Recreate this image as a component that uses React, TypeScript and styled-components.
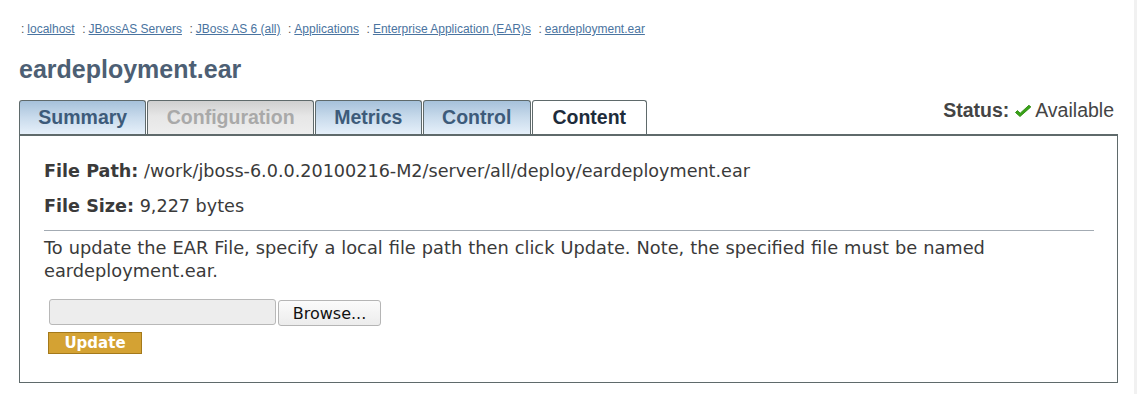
import React from "react";
import styled, { createGlobalStyle } from "styled-components";

const Global = createGlobalStyle`
  html, body { margin: 0; padding: 0; background: #fff; }
  body { font-family: "Liberation Sans", Arial, sans-serif; }
`;

const Page = styled.div`
  width: 1137px;
  min-height: 394px;
  box-sizing: border-box;
  border-right: 3px solid #f1f1f1;
  padding: 20px 16px 0 19px;
`;

const Crumbs = styled.nav`
  display: flex;
  gap: 7.5px;
  padding-left: 2px;
  font-size: 12px;
  line-height: 18px;
  color: #555;
`;

const Crumb = styled.span`
  display: inline-flex;
  gap: 3px;
`;

const CrumbLink = styled.a`
  color: #4a74a0;
  text-decoration: underline;
  cursor: pointer;
`;

const Title = styled.h1`
  margin: 16px 0 0;
  font-size: 25px;
  line-height: 30px;
  font-weight: bold;
  color: #4d5f74;
`;

const TabRow = styled.div`
  display: flex;
  align-items: flex-end;
  justify-content: space-between;
  margin-top: 15px;
`;

const Tabs = styled.div`
  display: flex;
  gap: 1px;
`;

const Tab = styled.div<{ $kind: "normal" | "disabled" | "active" }>`
  height: 34px;
  box-sizing: border-box;
  padding: 0 ${(p) => (p.$kind === "active" ? "19.8px" : "18.3px")};
  display: flex;
  align-items: center;
  font-size: 19.5px;
  font-weight: bold;
  border: 1px solid #5f6a6b;
  border-bottom: none;
  border-radius: 3px 3px 0 0;
  color: ${(p) =>
    p.$kind === "disabled" ? "#a9a9a9" : p.$kind === "active" ? "#1e2c3b" : "#3d5b7a"};
  background: ${(p) =>
    p.$kind === "disabled"
      ? "linear-gradient(#cfcfcf, #e6e6e6 45%, #eeeeee)"
      : p.$kind === "active"
      ? "#ffffff"
      : "linear-gradient(#a6c1da, #c9dbec 50%, #e6f0fa)"};
`;

const Status = styled.div`
  display: flex;
  align-items: center;
  gap: 3px;
  font-size: 19.5px;
  color: #444;
  padding-right: 4px;
  margin-bottom: 12px;
`;

const StatusLabel = styled.b`
  margin-right: 2px;
`;

const Panel = styled.section`
  border: 1px solid #5f6a6b;
  border-top-width: 2px;
  padding: 25px 23px 28px 24px;
  font-family: "DejaVu Sans", sans-serif;
  font-size: 17.6px;
  color: #3a3a3a;
`;

const Field = styled.p`
  margin: 0 0 14px;
  line-height: 21px;
`;

const Rule = styled.hr`
  border: none;
  border-top: 1px solid #a3abb3;
  margin: -1px 0 5px;
`;

const Note = styled.p`
  margin: 0;
  line-height: 23px;
  font-size: 17.8px;
  word-spacing: 0.35px;
`;

const UploadRow = styled.div`
  display: flex;
  align-items: center;
  gap: 2px;
  margin: 16px 0 0 5px;
`;

const FileBox = styled.div`
  width: 227px;
  height: 26px;
  box-sizing: border-box;
  border: 1px solid #b8b8b8;
  border-radius: 3px;
  background: #ededed;
`;

const Browse = styled.button`
  width: 103px;
  height: 26px;
  margin-top: 2px;
  border: 1px solid #b5b5b5;
  border-radius: 3px;
  background: linear-gradient(#fbfbfb, #ececec);
  font-family: "DejaVu Sans", sans-serif;
  font-size: 16px;
  color: #111;
  padding: 0;
`;

const UpdateButton = styled.button`
  display: block;
  margin: 6px 0 0 4px;
  width: 94px;
  height: 22px;
  border: 1px solid #a4791a;
  background: #d4a233;
  color: #fff;
  font-family: "DejaVu Sans", sans-serif;
  font-weight: bold;
  font-size: 15px;
  padding: 0;
`;

const crumbs = [
  "localhost",
  "JBossAS Servers",
  "JBoss AS 6 (all)",
  "Applications",
  "Enterprise Application (EAR)s",
  "eardeployment.ear",
];

const Check = () => (
  <svg width="18" height="16" viewBox="0 0 18 16">
    <path d="M1.5 9.5 L6 13.5 L16.8 4 L15 2.2 L6.2 10.2 L3.4 7.6 Z" fill="#3aa317" stroke="#2a8a0e" strokeWidth="0.9" strokeLinejoin="round" />
  </svg>
);

export default function App() {
  return (
    <>
      <Global />
      <Page>
        <Crumbs>
          {crumbs.map((c) => (
            <Crumb key={c}>
              <span>:</span>
              <CrumbLink>{c}</CrumbLink>
            </Crumb>
          ))}
        </Crumbs>
        <Title>eardeployment.ear</Title>
        <TabRow>
          <Tabs>
            <Tab $kind="normal">Summary</Tab>
            <Tab $kind="disabled">Configuration</Tab>
            <Tab $kind="normal">Metrics</Tab>
            <Tab $kind="normal">Control</Tab>
            <Tab $kind="active">Content</Tab>
          </Tabs>
          <Status>
            <StatusLabel>Status:</StatusLabel>
            <Check />
            <span>Available</span>
          </Status>
        </TabRow>
        <Panel>
          <Field>
            <b>File Path:</b> /work/jboss-6.0.0.20100216-M2/server/all/deploy/eardeployment.ear
          </Field>
          <Field>
            <b>File Size:</b> 9,227 bytes
          </Field>
          <Rule />
          <Note>
            To update the EAR File, specify a local file path then click Update. Note, the specified file must be named
            eardeployment.ear.
          </Note>
          <UploadRow>
            <FileBox />
            <Browse>Browse...</Browse>
          </UploadRow>
          <UpdateButton>Update</UpdateButton>
        </Panel>
      </Page>
    </>
  );
}
